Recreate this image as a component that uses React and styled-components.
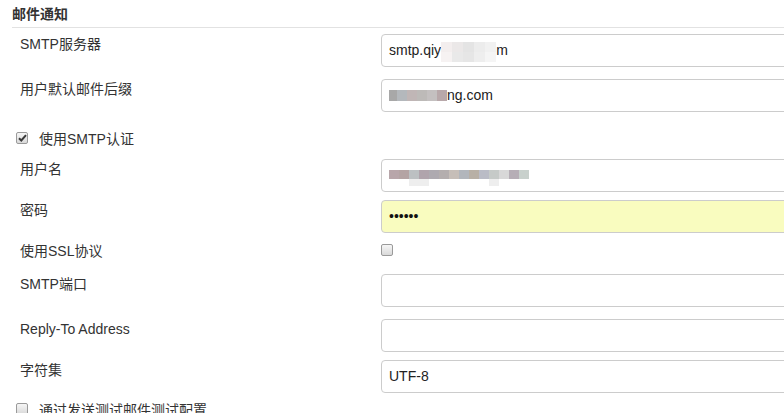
import React from 'react';
import styled, { createGlobalStyle } from 'styled-components';

const GlobalStyle = createGlobalStyle`
  html, body {
    margin: 0;
    padding: 0;
    background: #fff;
    overflow: hidden;
  }
  body {
    font-family: "Liberation Sans", Arial, "Noto Sans CJK SC", sans-serif;
    font-size: 14px;
    color: #333;
  }
`;

const Section = styled.div`
  padding-left: 12px;
  width: 772px;
  height: 413px;
`;

const Header = styled.div`
  margin-top: 4px;
  line-height: 20px;
  padding-bottom: 3px;
  font-weight: bold;
  color: #333;
  border-bottom: 1px solid #e2e2e2;
`;

const Row = styled.div`
  display: flex;
  align-items: flex-start;
  margin-top: ${p => p.$top}px;
`;

const Label = styled.div`
  width: 361px;
  padding-left: 8px;
  line-height: 20px;
  flex-shrink: 0;
`;

const Field = styled.div`
  box-sizing: border-box;
  width: 430px;
  height: 33px;
  padding: 0 7px;
  border: 1px solid #ccc;
  border-radius: 4px;
  background: ${p => (p.$filled ? '#f9fcbf' : '#fff')};
  color: #222;
  line-height: 31px;
  display: flex;
  align-items: center;
  white-space: nowrap;
  flex-shrink: 0;
`;

const Dots = styled.span`
  font-size: 14px;
  letter-spacing: 0;
  color: #111;
`;

const Mosaic = styled.span`
  display: inline-flex;
  flex-direction: column;
  margin-top: ${p => p.$shift || 0}px;
`;

const MosaicLine = styled.span`
  display: flex;
`;

const Block = styled.span`
  display: inline-block;
  width: ${p => p.$w || 10}px;
  height: ${p => p.$h || 10}px;
  background: ${p => p.$c};
`;

const Box = styled.span`
  box-sizing: border-box;
  display: inline-flex;
  align-items: center;
  justify-content: center;
  width: 12px;
  height: 12px;
  border: 1px solid #9a9a9a;
  border-radius: 2px;
  background: linear-gradient(#f6f6f6, #d9d9d9);
  flex-shrink: 0;
  margin-top: ${p => p.$top || 0}px;
`;

const CheckRow = styled.div`
  display: flex;
  align-items: center;
  height: 24px;
  padding-left: 4px;
  gap: 11px;
  margin-top: ${p => p.$top}px;
`;

const Checkbox = ({ checked, top }) => (
  <Box $top={top}>
    {checked && (
      <svg width="9" height="8" viewBox="0 0 9 8">
        <path d="M1 4.2 L3.3 6.5 L8 1.2" fill="none" stroke="#3a3a3a" strokeWidth="2" />
      </svg>
    )}
  </Box>
);

const blob1 = [
  ['#f3eeee', '#ebe8e8', '#e4e4e4', '#ececec', '#f1f1f1'],
  ['#f6f2f2', '#e9e9e9', '#e6e6e6', '#eeeeee', '#f5f5f5'],
];

const blob2 = ['#a8a8a8', '#b4b8bc', '#c0b6b6', '#bdbab8', '#c4c0c0', '#b8a8aa'];

const blob3 = [
  '#b8a6aa', '#b4a4a4', '#bcc0c2', '#b0a4ac', '#aeaab0', '#b4aeae', '#c6beb8',
  '#b2b6bc', '#b8b0a6', '#babcc6', '#c6cac8', '#d8d8d8', '#b6aeb6', '#c8d0cc',
];

export default function App() {
  return (
    <>
      <GlobalStyle />
      <Section>
        <Header>邮件通知</Header>

        <Row $top={6}>
          <Label>SMTP服务器</Label>
          <Field>
            smtp.qiy
            <Mosaic $shift={2}>
              {blob1.map((line, i) => (
                <MosaicLine key={i}>
                  {line.map((c, j) => <Block key={j} $c={c} $w={11} />)}
                </MosaicLine>
              ))}
            </Mosaic>
            m
          </Field>
        </Row>

        <Row $top={12}>
          <Label>用户默认邮件后缀</Label>
          <Field>
            <Mosaic>
              <MosaicLine>
                {blob2.map((c, i) => <Block key={i} $c={c} $w={i === 0 ? 8 : 10} $h={11} />)}
              </MosaicLine>
            </Mosaic>
            ng.com
          </Field>
        </Row>

        <CheckRow $top={14}>
          <Checkbox checked />
          <span>使用SMTP认证</span>
        </CheckRow>

        <Row $top={9}>
          <Label>用户名</Label>
          <Field>
            <Mosaic $shift={5}>
              <MosaicLine>
                {blob3.map((c, i) => <Block key={i} $c={c} $h={9} />)}
              </MosaicLine>
              <MosaicLine>
                <Block $c="#fff" $w={20} $h={7} />
                <Block $c="#eeeeee" $w={20} $h={7} />
                <Block $c="#fff" $w={60} $h={7} />
                <Block $c="#eeeeee" $w={10} $h={7} />
              </MosaicLine>
            </Mosaic>
          </Field>
        </Row>

        <Row $top={8}>
          <Label>密码</Label>
          <Field $filled>
            <Dots>••••••</Dots>
          </Field>
        </Row>

        <Row $top={8}>
          <Label>使用SSL协议</Label>
          <Checkbox top={3} />
        </Row>

        <Row $top={13}>
          <Label>SMTP端口</Label>
          <Field />
        </Row>

        <Row $top={12}>
          <Label>Reply-To Address</Label>
          <Field />
        </Row>

        <Row $top={8}>
          <Label>字符集</Label>
          <Field>UTF-8</Field>
        </Row>

        <CheckRow $top={4}>
          <Checkbox />
          <span>通过发送测试邮件测试配置</span>
        </CheckRow>
      </Section>
    </>
  );
}
